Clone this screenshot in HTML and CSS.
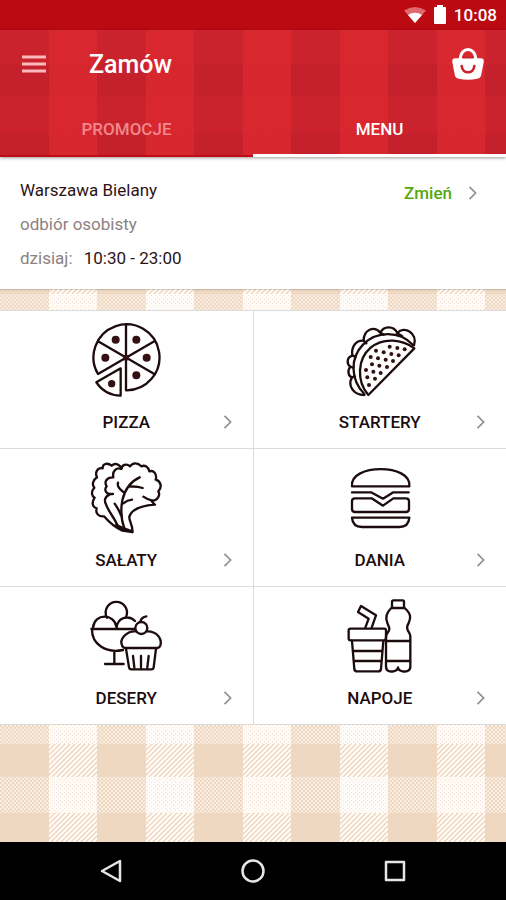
FILE: index.html
```
<!DOCTYPE html>
<html lang="pl">
<head>
    <meta charset="UTF-8">
    <meta name="viewport" content="width=device-width, initial-scale=1.0">
    <title>Zamów</title>
    <link rel="stylesheet" href="styles.css">
</head>
<body>
    <div class="status-bar">
        <svg width="22" height="18" viewBox="0 0 22 20" preserveAspectRatio="none">
            <path d="M0 5Q11-3 22 5L11 19Z" fill="#e0696d"/>
            <path d="M4 10Q11 5 18 10L11 19Z" fill="#fff"/>
        </svg>
        <svg width="12" height="20" viewBox="0 0 12 20">
            <path d="M3 0H9V2H11Q12 2 12 3V18Q12 19 11 19H1Q0 19 0 18V3Q0 2 1 2H3Z" fill="#fff"/>
        </svg>
        <span>10:08</span>
    </div>

    <header class="header">
        <div class="app-bar">
            <button class="icon-button" type="button" aria-label="Otwórz menu">
                <svg width="24" height="20" viewBox="0 0 24 20" stroke="#fbb9bb" stroke-width="3">
                    <path d="M0 3H24M0 10H24M0 17H24"/>
                </svg>
            </button>
            <h1>Zamów</h1>
            <button class="icon-button" type="button" aria-label="Koszyk">
                <svg width="32" height="32" viewBox="0 0 96 96">
                    <path d="M25 34C25-5 71-5 71 34" fill="none" stroke="#fff" stroke-width="9"/>
                    <path d="M8 31H88Q97 32 95 43L87 84Q85 90 76 92Q48 98 20 92Q11 90 9 84L1 43Q-1 32 8 31Z" fill="#fff"/>
                    <path d="M29 54C31 79 65 79 67 54" fill="none" stroke="#cc222b" stroke-width="8" stroke-linecap="round"/>
                    <path d="M32 28H64" stroke="#cc222b" stroke-width="6"/>
                </svg>
            </button>
        </div>
        <nav class="tabs">
            <a href="#promocje">PROMOCJE</a>
            <a class="active" href="#menu">MENU</a>
        </nav>
    </header>

    <main>
        <section class="store">
            <div class="store-info">
                <p class="dark">Warszawa Bielany</p>
                <p>odbiór osobisty</p>
                <p>dzisiaj: <span class="dark hours">10:30 - 23:00</span></p>
            </div>
            <a class="change" href="#zmien">Zmień
                <svg class="chevron" viewBox="0 0 10 16"><path d="M1 1L8 8L1 15"/></svg>
            </a>
        </section>

        <section class="menu" id="menu">
            <a class="item" href="#pizza">
                <svg class="picture" viewBox="21 15 240 240">
                    <path d="M57 177A99 99 0 1 1 141 226V28M57 177L226 79M57 79L226 177"/>
                    <path d="M125 160L52 202Q78 241 125 242Z"/>
                    <g class="dots">
                        <circle cx="110" cy="74" r="12"/><circle cx="172" cy="74" r="12"/>
                        <circle cx="79" cy="128" r="12"/><circle cx="203" cy="128" r="12"/>
                        <circle cx="172" cy="181" r="12"/><circle cx="98" cy="206" r="11"/>
                        <circle cx="141" cy="128" r="9"/>
                    </g>
                </svg>
                <div class="label">
                    <span>PIZZA</span>
                    <svg class="chevron" viewBox="0 0 10 16"><path d="M1 1L8 8L1 15"/></svg>
                </div>
            </a>
            <a class="item" href="#startery">
                <svg class="picture" viewBox="30 15 240 240">
                    <path d="M115 240C79 198 82 132 122 98C161 66 217 73 253 100Z"/>
                    <path d="M103 237C62 195 59 130 99 89C139 48 207 46 249 90"/>
                    <path d="M252 91C264 55 223 30 202 54C190 30 160 34 151 53C132 31 101 44 101 77C78 75 63 95 67 122C49 127 50 148 61 155C51 166 55 184 66 187C53 209 67 240 103 240"/>
                    <path d="M201 54L216 63M151 52L161 59M101 77L109 85M67 121L77 126M60 155L70 158M65 187L75 184"/>
                    <g class="dots">
                        <circle cx="179" cy="95" r="6"/><circle cx="202" cy="99" r="6"/><circle cx="224" cy="103" r="6"/>
                        <circle cx="138" cy="107" r="6"/><circle cx="161" cy="112" r="6"/><circle cx="184" cy="117" r="6"/><circle cx="206" cy="121" r="6"/>
                        <circle cx="122" cy="126" r="6"/><circle cx="144" cy="130" r="6"/><circle cx="167" cy="134" r="6"/><circle cx="189" cy="138" r="6"/>
                        <circle cx="126" cy="148" r="6"/><circle cx="148" cy="152" r="6"/><circle cx="171" cy="156" r="6"/>
                        <circle cx="108" cy="165" r="6"/><circle cx="130" cy="170" r="6"/><circle cx="152" cy="174" r="6"/>
                        <circle cx="112" cy="187" r="6"/><circle cx="135" cy="191" r="6"/><circle cx="117" cy="210" r="6"/>
                    </g>
                </svg>
                <div class="label">
                    <span>STARTERY</span>
                    <svg class="chevron" viewBox="0 0 10 16"><path d="M1 1L8 8L1 15"/></svg>
                </div>
            </a>
            <a class="item" href="#salaty">
                <svg class="picture" viewBox="21 18 240 240">
                    <path d="M128 48C119 36 108 32 98 41C84 30 70 36 71 49C55 46 47 61 54 76C40 85 39 99 46 107C35 119 38 132 47 137C37 152 40 165 53 169C48 184 60 195 75 193C89 209 108 227 130 236L160 240"/>
                    <path d="M160 240C163 222 149 205 151 194C157 173 189 161 228 158C223 155 221 151 218 147C235 146 245 130 238 118C250 106 246 87 230 83C235 67 224 53 211 58C208 44 198 38 187 43C175 30 161 32 153 43C142 33 128 39 127 51C114 45 99 56 103 76C84 75 74 89 83 103C75 112 80 125 92 126H102"/>
                    <path d="M92 127C77 134 75 146 81 157C89 180 109 201 117 224M107 155C116 168 122 178 126 190"/>
                    <path d="M182 76C153 89 137 114 130 145C124 177 127 206 137 232M152 104Q172 102 191 108M117 92C114 105 123 111 133 120M133 154Q145 144 159 143M193 134Q204 142 220 146"/>
                    <path d="M112 220Q132 231 158 238" stroke-width="9"/>
                </svg>
                <div class="label">
                    <span>SAŁATY</span>
                    <svg class="chevron" viewBox="0 0 10 16"><path d="M1 1L8 8L1 15"/></svg>
                </div>
            </a>
            <a class="item" href="#dania">
                <svg class="picture" viewBox="30 18 240 240">
                    <path d="M66 103C58 34 246 34 238 103Z"/>
                    <path d="M66 121H123L159 140L190 121H236"/>
                    <path d="M75 139H125L159 161L190 139H228Q237 139 237 148V171Q237 180 228 180H75Q66 180 66 171V148Q66 139 75 139Z"/>
                    <path d="M66 197H238Q236 225 208 225H96Q68 225 66 197Z"/>
                </svg>
                <div class="label">
                    <span>DANIA</span>
                    <svg class="chevron" viewBox="0 0 10 16"><path d="M1 1L8 8L1 15"/></svg>
                </div>
            </a>
            <a class="item" href="#desery">
                <svg class="picture" viewBox="21 18 240 240">
                    <path d="M84 83A32 32 0 1 1 140 83M42 113C46 69 107 69 113 113C116 80 151 75 168 93M37 117H166M39 118C38 162 80 191 132 180M106 184V221M78 222H134"/>
                    <circle cx="187" cy="114" r="18"/>
                    <path d="M184 95Q187 81 202 79"/>
                    <path d="M169 124C141 123 121 149 129 166Q132 174 140 174H234Q241 174 244 166C251 144 230 123 205 124"/>
                    <path d="M141 176L150 232Q151 238 157 238H217Q223 238 224 232L231 176M162 198L166 232M186 198V232M209 198L205 232"/>
                </svg>
                <div class="label">
                    <span>DESERY</span>
                    <svg class="chevron" viewBox="0 0 10 16"><path d="M1 1L8 8L1 15"/></svg>
                </div>
            </a>
            <a class="item" href="#napoje">
                <svg class="picture" viewBox="30 18 240 240">
                    <path d="M62 116H163Q168 116 168 121V145Q168 151 162 151H62Q56 151 56 145V121Q56 116 62 116Z"/>
                    <path d="M66 153L73 237Q74 244 81 244H145Q152 244 153 237L160 153M70 183H157M73 213H155"/>
                    <path d="M106 113L116 86L84 66L93 48L138 76L125 113"/>
                    <path d="M186 53V35Q186 31 190 31H218Q222 31 222 35V53"/>
                    <path d="M184 54H224C244 72 243 84 236 99C228 111 230 119 238 129Q241 134 241 142V230C241 242 230 246 218 244Q204 242 204 232Q204 242 190 244C178 246 168 242 168 230V142Q168 134 173 128C182 118 177 111 172 99C165 83 167 70 184 54ZM168 153H241M168 213H241"/>
                </svg>
                <div class="label">
                    <span>NAPOJE</span>
                    <svg class="chevron" viewBox="0 0 10 16"><path d="M1 1L8 8L1 15"/></svg>
                </div>
            </a>
        </section>
    </main>

    <footer class="system-nav">
        <button type="button" aria-label="Wstecz">
            <svg width="24" height="24" viewBox="0 0 24 24"><path d="M3 12L21 2V22Z"/></svg>
        </button>
        <button type="button" aria-label="Ekran główny">
            <svg width="24" height="24" viewBox="0 0 24 24"><circle cx="12" cy="12" r="10.5"/></svg>
        </button>
        <button type="button" aria-label="Ostatnie aplikacje">
            <svg width="24" height="24" viewBox="0 0 24 24"><rect x="3" y="3" width="18" height="18"/></svg>
        </button>
    </footer>
</body>
</html>
```
FILE: styles.css
```
* {
    box-sizing: border-box;
}
body {
    display: flex;
    flex-direction: column;
    min-height: 100vh;
    margin: 0;
    font-family: Roboto, "Liberation Sans", sans-serif;
    font-size: 17px;
    color: #2b1315;
}
a {
    color: inherit;
    text-decoration: none;
}
button {
    display: flex;
    justify-content: center;
    align-items: center;
    padding: 0;
    border: 0;
    background: none;
    cursor: pointer;
}
.status-bar {
    display: flex;
    justify-content: flex-end;
    align-items: center;
    gap: 8px;
    height: 30px;
    padding-right: 9px;
    background-color: #bb0a12;
    color: #fff;
    font-size: 17px;
    font-weight: 500;
}
/* Checked tablecloth, red version */
.header {
    position: relative;
    z-index: 1;
    background: url("data:image/svg+xml,%3Csvg xmlns='http://www.w3.org/2000/svg' width='97' height='69'%3E%3Cdefs%3E%3Cpattern id='s' width='5' height='5' patternUnits='userSpaceOnUse'%3E%3Cpath d='M-1 1L1-1M0 5L5 0M4 6L6 4' stroke='%23cf252d'/%3E%3C/pattern%3E%3C/defs%3E%3Cpath fill='%23d9272f' d='M0 0H97V69H0z'/%3E%3Cpath fill='url(%23s)' d='M49 0H97V33H49z'/%3E%3Cpath fill='%23c5212c' d='M0 0H49V33H0z'/%3E%3Cpath fill='%23ca232d' d='M0 33H49V69H0z'/%3E%3C/svg%3E") 0 34px;
    box-shadow: 0 1px 3px rgba(0,0,0,0.4);
}
.app-bar {
    display: flex;
    align-items: center;
    height: 68px;
    padding: 0 22px;
}
.app-bar h1 {
    flex: 1;
    margin: 0 0 0 43px;
    color: #fff;
    font-size: 25px;
    font-weight: 500;
    line-height: 32px;
    padding-top: 2px;
}
.tabs {
    display: flex;
}
.tabs a {
    flex: 1;
    height: 59px;
    border-bottom: 2px solid #c00c18;
    color: #f1888c;
    font-weight: 500;
    line-height: 62px;
    text-align: center;
}
.tabs .active {
    border-bottom: 3px solid #fff;
    color: #fff;
}
/* Checked tablecloth, beige version */
main {
    flex: 1;
    background: url("data:image/svg+xml,%3Csvg xmlns='http://www.w3.org/2000/svg' width='97' height='69'%3E%3Cdefs%3E%3Cpattern id='s' width='5' height='5' patternUnits='userSpaceOnUse'%3E%3Cpath d='M-1 1L1-1M0 5L5 0M4 6L6 4' stroke='%23efd7bf' stroke-width='1.5'/%3E%3C/pattern%3E%3Cpattern id='d' width='4' height='4' patternUnits='userSpaceOnUse'%3E%3Cpath d='M0 0H2V2H0zM2 2H4V4H2z' fill='%23f9ede2'/%3E%3C/pattern%3E%3Cpattern id='w' width='4' height='4' patternUnits='userSpaceOnUse'%3E%3Cpath d='M0 0H1V1H0zM2 2H3V3H2z' fill='%23f3e0cf'/%3E%3C/pattern%3E%3C/defs%3E%3Cpath fill='%23fffcf9' d='M0 0H97V69H0z'/%3E%3Cpath fill='%23efd8c1' d='M0 0H49V69H0z'/%3E%3Cpath fill='url(%23s)' d='M49 0H97V33H49z'/%3E%3Cpath fill='url(%23d)' d='M0 33H49V69H0z'/%3E%3Cpath fill='url(%23w)' d='M49 33H97V69H49z'/%3E%3C/svg%3E") 0 35px;
}
.store {
    display: flex;
    justify-content: space-between;
    padding: 16px 28px 14px 20px;
    margin-bottom: 21px;
    background-color: #fff;
    box-shadow: 0 1px 1px rgba(0,0,0,0.15);
    line-height: 34px;
}
.store p {
    margin: 0;
    color: #8d8180;
}
.store .dark {
    color: #2b1315;
}
.store .hours {
    margin-left: 7px;
}
.change {
    display: flex;
    align-items: center;
    gap: 16px;
    height: 40px;
    color: #55a80c;
    font-weight: 500;
}
.chevron {
    width: 10px;
    height: 14px;
    fill: none;
    stroke: #929292;
    stroke-width: 2;
}
.menu {
    display: grid;
    grid-template-columns: 1fr 1fr;
    gap: 1px;
    padding: 1px 0;
    background-color: #dedcdb;
}
.item {
    display: flex;
    flex-direction: column;
    align-items: center;
    gap: 11px;
    padding: 9px 0 15px;
    background-color: #fff;
    color: #1d0c0e;
    font-weight: 500;
}
.picture {
    width: 80px;
    height: 80px;
    fill: none;
    stroke: #1d0c0e;
    stroke-width: 7;
    stroke-linecap: round;
    stroke-linejoin: round;
}
.picture .dots {
    fill: #321013;
    stroke: none;
}
.label {
    display: grid;
    grid-template-columns: 1fr auto 1fr;
    align-items: center;
    width: 100%;
    padding: 0 20px;
    line-height: 22px;
}
.label span {
    grid-column: 2;
}
.label .chevron {
    justify-self: end;
}
.system-nav {
    display: flex;
    justify-content: center;
    height: 58px;
    background-color: #000;
}
.system-nav button {
    width: 142px;
}
.system-nav svg {
    fill: none;
    stroke: #e6e6e6;
    stroke-width: 2.5;
    stroke-linejoin: round;
}
```
